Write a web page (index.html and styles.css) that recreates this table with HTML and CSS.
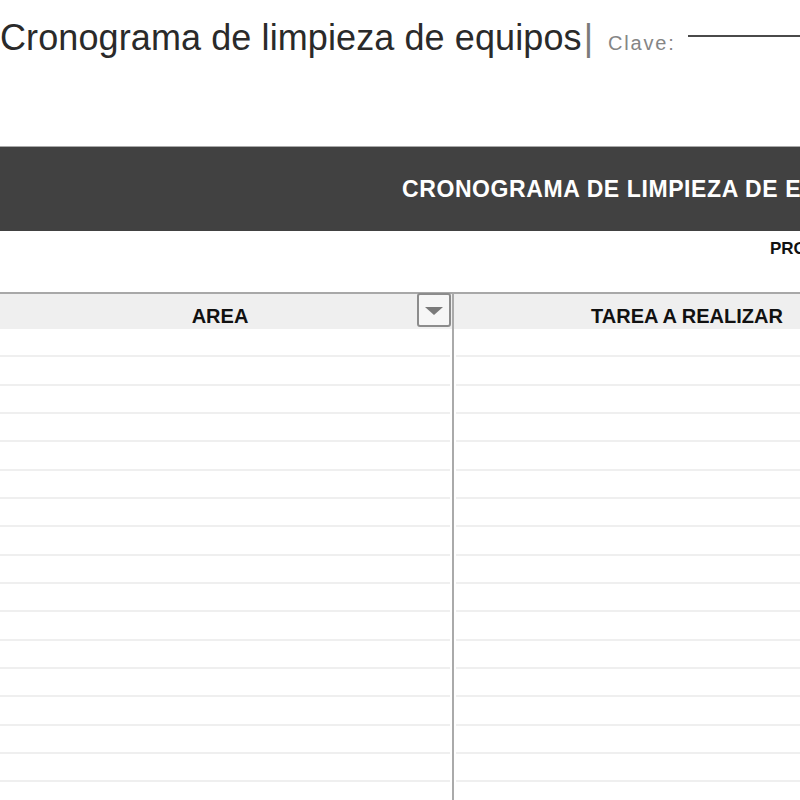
FILE: index.html
```html
<!DOCTYPE html>
<html lang="es">
<head>
<meta charset="utf-8">
<title>Cronograma de limpieza de equipos</title>
<link rel="stylesheet" href="styles.css">
</head>
<body>
<header class="top">
  <h1 class="title">Cronograma de limpieza de equipos<span class="pipe">|</span></h1>
  <span class="clave">Clave:</span>
  <span class="clave-line"></span>
</header>

<section class="sheet">
  <div class="banner">CRONOGRAMA DE LIMPIEZA DE EQUIPOS</div>
  <div class="subrow"><span class="sub-text">PROCEDIMIENTO</span></div>
  <div class="grid">
    <div class="col col-area">
      <div class="head">AREA
        <span class="dd"><span class="tri"></span></span>
      </div>
      <div class="row"></div><div class="row"></div><div class="row"></div>
      <div class="row"></div><div class="row"></div><div class="row"></div>
      <div class="row"></div><div class="row"></div><div class="row"></div>
      <div class="row"></div><div class="row"></div><div class="row"></div>
      <div class="row"></div><div class="row"></div><div class="row"></div>
      <div class="row"></div><div class="row"></div><div class="row"></div>
    </div>
    <div class="col col-task">
      <div class="head">TAREA A REALIZAR</div>
      <div class="row"></div><div class="row"></div><div class="row"></div>
      <div class="row"></div><div class="row"></div><div class="row"></div>
      <div class="row"></div><div class="row"></div><div class="row"></div>
      <div class="row"></div><div class="row"></div><div class="row"></div>
      <div class="row"></div><div class="row"></div><div class="row"></div>
      <div class="row"></div><div class="row"></div><div class="row"></div>
    </div>
  </div>
</section>
</body>
</html>
```

FILE: styles.css
```css
html, body {
  margin: 0;
  padding: 0;
  background: #ffffff;
  overflow: hidden;
  width: 800px;
  height: 800px;
}

body {
  font-family: "Liberation Sans", Arial, sans-serif;
  color: #222;
}

.top {
  display: flex;
  align-items: baseline;
  height: 146px;
  padding-top: 17px;
  box-sizing: border-box;
  white-space: nowrap;
}

.title {
  margin: 0;
  font-size: 36px;
  font-weight: normal;
  color: #2a2a2a;
  letter-spacing: 0.1px;
}

.pipe {
  color: #7a7a7a;
  margin-left: 2px;
}

.clave {
  font-size: 20px;
  color: #858585;
  letter-spacing: 1.8px;
  margin-left: 15px;
}

.clave-line {
  display: inline-block;
  width: 120px;
  height: 2px;
  background: #4a4a4a;
  margin-left: 12px;
  align-self: flex-start;
  margin-top: 18px;
}

.sheet {
  margin-left: -12px;
  width: 932px;
}

.banner {
  height: 85px;
  background: #414141;
  border-top: 1px solid #a9a9a9;
  box-sizing: border-box;
  color: #ffffff;
  font-weight: bold;
  font-size: 23px;
  letter-spacing: 0.6px;
  line-height: 84px;
  padding-left: 414px;
  white-space: nowrap;
  overflow: hidden;
}

.subrow {
  height: 61px;
  box-sizing: border-box;
  padding-left: 782px;
  padding-top: 8px;
  white-space: nowrap;
}

.sub-text {
  font-weight: bold;
  font-size: 17px;
  color: #111;
}

.grid {
  display: grid;
  grid-template-columns: 464px 2px 466px;
  border-top: 2px solid #a8a8a8;
}

.col-area {
  grid-column: 1;
}

.col-task {
  grid-column: 3;
  border-left: 2px solid #aaaaaa;
  margin-left: -2px;
}

.head {
  position: relative;
  height: 35px;
  background: #efefef;
  text-align: center;
  font-weight: bold;
  font-size: 20px;
  line-height: 44px;
  color: #111;
}

.dd {
  position: absolute;
  right: 1px;
  top: -1px;
  width: 34px;
  height: 34px;
  box-sizing: border-box;
  border: 2px solid #8c8c8c;
  border-radius: 3px;
  background: #f6f6f6;
  display: flex;
  align-items: center;
  justify-content: center;
}

.tri {
  width: 0;
  height: 0;
  border-left: 9px solid transparent;
  border-right: 9px solid transparent;
  border-top: 8px solid #7a7a7a;
  margin-top: 2px;
}

.row {
  height: 28.33px;
  box-sizing: border-box;
  border-bottom: 2px solid #efefef;
}

.col-area .row {
  margin-right: 2px;
}

.col-task .row {
  margin-left: 2px;
}
```
